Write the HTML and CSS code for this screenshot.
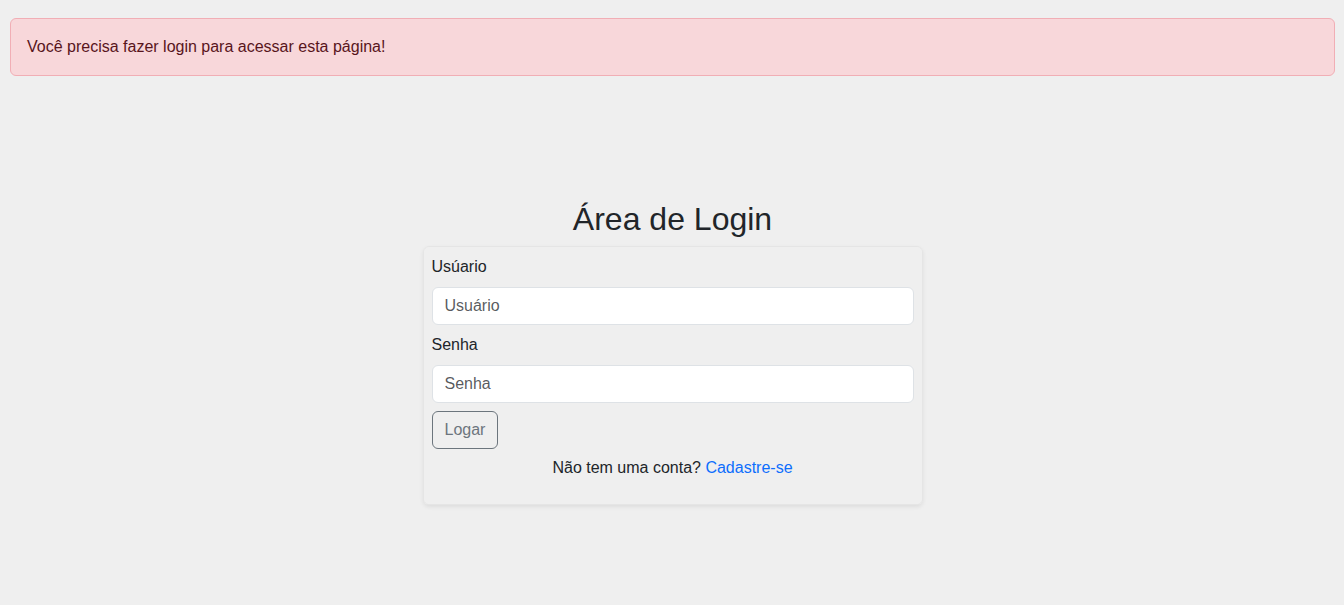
FILE: index.html
```html
<!DOCTYPE html>
<html lang="pt-BR">
<head>
<meta charset="utf-8">
<title>Login</title>
<link rel="stylesheet" href="styles.css">
</head>
<body>
<div class="alert">Você precisa fazer login para acessar esta página!</div>
<main class="login">
  <h2 class="title">Área de Login</h2>
  <form class="card">
    <label class="label" for="usuario">Usúario</label>
    <input class="input" id="usuario" type="text" placeholder="Usuário">
    <label class="label" for="senha">Senha</label>
    <input class="input" id="senha" type="password" placeholder="Senha">
    <div class="actions"><button class="btn" type="button">Logar</button></div>
    <p class="signup">Não tem uma conta? <a href="#" class="link">Cadastre-se</a></p>
  </form>
</main>
</body>
</html>
```
FILE: styles.css
```css
* { box-sizing: border-box; }
html, body { height: 100%; }
body {
  margin: 0;
  padding: 18px 9px 0 10px;
  background: #efefef;
  font-family: "Liberation Sans", Arial, sans-serif;
  font-size: 16px;
  line-height: 24px;
  color: #212529;
}
.alert {
  background: #f8d7da;
  border: 1px solid #f1aeb5;
  border-radius: 6px;
  color: #58151c;
  padding: 16px;
  line-height: 24px;
}
.login {
  width: 500px;
  margin: 124px auto 0;
  display: flex;
  flex-direction: column;
}
.title {
  margin: 0 0 8px;
  font-size: 32px;
  font-weight: 400;
  line-height: 38.4px;
  text-align: center;
  color: #212529;
}
.card {
  border: 1px solid rgba(0,0,0,0.04);
  border-radius: 6px;
  box-shadow: 0 2px 4px rgba(0,0,0,0.075);
  padding: 8px;
  display: flex;
  flex-direction: column;
  margin: 0;
}
.label {
  display: block;
  margin-bottom: 8px;
}
.input {
  display: block;
  width: 100%;
  height: 38px;
  padding: 6px 12px;
  font: inherit;
  color: #212529;
  background: #fff;
  border: 1px solid #dee2e6;
  border-radius: 6px;
  margin-bottom: 8px;
}
.input::placeholder { color: rgba(33,37,41,0.75); }
.actions { display: flex; }
.btn {
  height: 38px;
  padding: 6px 12px;
  font: inherit;
  color: #6c757d;
  background: transparent;
  border: 1px solid #6c757d;
  border-radius: 6px;
}
.signup {
  margin: 7px 0 16px;
  text-align: center;
}
.link { color: #0d6efd; text-decoration: none; }
```
